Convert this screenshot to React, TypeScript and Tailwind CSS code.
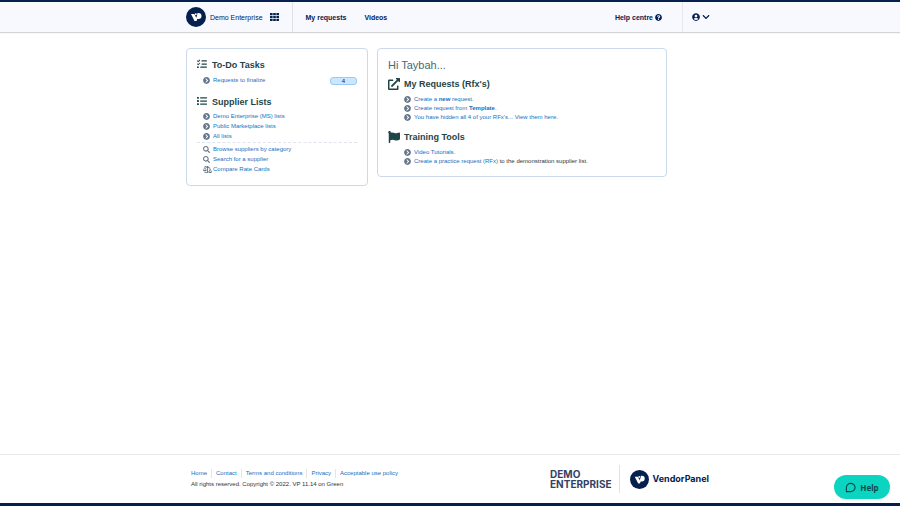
import type { ReactNode } from 'react'
import {
  FaBalanceScaleRight,
  FaChevronCircleRight,
  FaChevronDown,
  FaExternalLinkAlt,
  FaFlag,
  FaList,
  FaQuestionCircle,
  FaSearch,
  FaUserCircle,
} from 'react-icons/fa'
import { FaListCheck } from 'react-icons/fa6'

const supplierLists = ['Demo Enterprise (MS) lists', 'Public Marketplace lists', 'All lists']

const footerLinks = ['Home', 'Contact', 'Terms and conditions', 'Privacy', 'Acceptable use policy']

function Logo({ className }: { className: string }) {
  return (
    <svg viewBox="0 0 40 40" className={className} aria-hidden="true">
      <circle cx="20" cy="20" r="20" fill="#05204f" />
      <path d="M10 14h6.500l4 7.500V28h-3.500z" fill="#fff" />
      <path d="M23 12h2a6 6 0 0 1 0 12h-2.500L21 28h-4l4.500-9z" fill="#fff" />
      <circle cx="19.500" cy="14.500" r="2" fill="#fff" />
    </svg>
  )
}

function GridIcon() {
  return (
    <svg viewBox="0 0 17 15" className="h-[8px] w-[9px]" fill="#05204f" aria-hidden="true">
      {[0, 6, 12].map((x) =>
        [0, 5.5, 11].map((y) => <rect key={`${x}-${y}`} x={x} y={y} width="5" height="4" rx="0.5" />)
      )}
    </svg>
  )
}

function Card({ className, children }: { className: string; children: ReactNode }) {
  return (
    <section className={`rounded-[4px] border border-[#cbd9e8] bg-white px-[10px] ${className}`}>
      {children}
    </section>
  )
}

function Row({ icon, children }: { icon?: ReactNode; children: ReactNode }) {
  return (
    <li className="flex items-center">
      <span className="w-[10px] shrink-0 text-[7px] text-[#65758a]">
        {icon ?? <FaChevronCircleRight />}
      </span>
      {children}
    </li>
  )
}

function TextLink({ children }: { children: ReactNode }) {
  return (
    <a href="#" className="text-[#176fc1] hover:underline">
      {children}
    </a>
  )
}

export default function App() {
  return (
    <div className="flex min-h-screen flex-col border-b-[3px] border-[#05204f] bg-white font-['Liberation_Sans',Arial,sans-serif] text-[6px] leading-[9px] text-[#333]">
      {/* Header */}
      <header className="border-t-2 border-t-[#05204f] bg-[#f8f9ff] text-[7px] text-[#05204f] shadow-[0_1px_1px_#d4d5d8]">
        <div className="mx-auto flex h-[30px] max-w-[528px] items-center">
          <a href="#" className="flex items-center gap-1">
            <Logo className="size-[20px]" />
            <span>Demo Enterprise</span>
          </a>
          <button type="button" aria-label="Apps" className="ml-[7px]">
            <GridIcon />
          </button>
          <nav className="ml-[13px] flex items-center gap-[18px] self-stretch border-l border-[#dfe2ea] pl-[13px] font-bold">
            <a href="#">My requests</a>
            <a href="#">Videos</a>
          </nav>
          <a href="#" className="mr-5 ml-auto flex items-center gap-[2px] font-bold">
            Help centre <FaQuestionCircle />
          </a>
          <div className="flex w-[32px] items-center self-stretch border-l border-[#e6e8ef] pl-[9px]">
            <button type="button" aria-label="Account" className="flex items-center gap-[2px]">
              <FaUserCircle className="size-[8px]" />
              <FaChevronDown className="size-[8px]" />
            </button>
          </div>
        </div>
      </header>

      {/* Panels */}
      <main className="mx-auto flex w-full max-w-[530px] grow items-start gap-[9px] pt-4">
        <Card className="ml-px w-[182px] pt-[10px] pb-[11px]">
          <h2 className="flex items-center text-[9px] leading-[12px] font-bold text-[#1f4546]">
            <FaListCheck className="mr-[5px] mb-[2px] size-[10px]" />
            To-Do Tasks
          </h2>
          <div className="mt-[5px] flex items-center justify-between pl-[6px]">
            <ul>
              <Row>
                <TextLink>Requests to finalize</TextLink>
              </Row>
            </ul>
            <span className="h-[8px] w-[27px] rounded-[3px] border border-[#9bcbf5] bg-[#cbe6ff] text-center leading-[6px] text-[#05204f]">
              4
            </span>
          </div>

          <h2 className="mt-[11px] flex items-center text-[9px] leading-[12px] font-bold text-[#1f4546]">
            <FaList className="mr-[5px] mb-[2px] size-[10px]" />
            Supplier Lists
          </h2>
          <ul className="mt-1 space-y-px pl-[6px]">
            {supplierLists.map((name) => (
              <Row key={name}>
                <TextLink>{name}</TextLink>
              </Row>
            ))}
          </ul>
          <ul className="mt-px space-y-px border-t border-dashed border-[#e0e4ec] pt-[2px] pl-[6px]">
            <Row icon={<FaSearch />}>
              <TextLink>Browse suppliers by category</TextLink>
            </Row>
            <Row icon={<FaSearch />}>
              <TextLink>Search for a supplier</TextLink>
            </Row>
            <Row icon={<FaBalanceScaleRight className="h-[7px] w-[9px]" />}>
              <TextLink>Compare Rate Cards</TextLink>
            </Row>
          </ul>
        </Card>

        <Card className="w-[290px] pt-[10px] pb-[10px]">
          <h1 className="text-[11px] leading-[13px] text-[#4c6a6b]">Hi Taybah...</h1>
          <h2 className="mt-[6px] flex items-center text-[9px] leading-[12px] font-bold text-[#1f4546]">
            <FaExternalLinkAlt className="mr-1 size-[12px]" />
            My Requests (Rfx's)
          </h2>
          <ul className="mt-[5px] pl-4">
            <Row>
              <TextLink>
                Create a <b>new</b> request.
              </TextLink>
            </Row>
            <Row>
              <TextLink>
                Create request from <b>Template</b>.
              </TextLink>
            </Row>
            <Row>
              <TextLink>You have hidden all 4 of your RFx's... View them here.</TextLink>
            </Row>
          </ul>

          <h2 className="mt-[9px] flex items-center text-[9px] leading-[12px] font-bold text-[#1f4546]">
            <FaFlag className="mr-1 size-[12px]" />
            Training Tools
          </h2>
          <ul className="mt-[5px] pl-4">
            <Row>
              <TextLink>Video Tutorials.</TextLink>
            </Row>
            <Row>
              <p>
                <TextLink>Create a practice request (RFx)</TextLink> to the demonstration supplier
                list.
              </p>
            </Row>
          </ul>
        </Card>
      </main>

      {/* Footer */}
      <footer className="border-t border-[#e9e9e9]">
        <div className="mx-auto flex h-12 max-w-[518px] items-center justify-between">
          <div>
            <ul className="flex">
              {footerLinks.map((name) => (
                <li
                  key={name}
                  className="mr-1 border-r border-[#e6e6e6] pr-1 last:mr-0 last:border-0"
                >
                  <TextLink>{name}</TextLink>
                </li>
              ))}
            </ul>
            <p className="mt-[2px]">All rights reserved. Copyright © 2022. VP 11.14 on Green</p>
          </div>
          <div className="flex items-center">
            <div className="font-['Inter',sans-serif] text-[10px] leading-[10px] font-bold text-[#363f64]">
              <p>DEMO</p>
              <p>ENTERPRISE</p>
            </div>
            <div className="ml-[7px] h-7 w-px bg-[#dfe2ea]" />
            <Logo className="ml-[10px] size-[19px]" />
            <span className="ml-1 font-['Inter',sans-serif] text-[9px] leading-[12px] font-bold text-[#05204f]">
              VendorPanel
            </span>
          </div>
        </div>
      </footer>

      {/* Help widget, floats over the page */}
      <button
        type="button"
        className="fixed right-[10px] bottom-[7px] flex h-6 w-14 items-center justify-center gap-1 rounded-full bg-[#0bd5c1] font-['Noto_Sans',sans-serif] text-[8px] font-bold text-[#0b4a4f]"
      >
        <svg viewBox="0 0 24 24" className="size-[11px]" fill="none" aria-hidden="true">
          <path
            d="M3 21V12a9.500 9 0 1 1 9.500 9z"
            stroke="currentColor"
            strokeWidth="2.500"
            strokeLinejoin="round"
          />
        </svg>
        Help
      </button>
    </div>
  )
}
